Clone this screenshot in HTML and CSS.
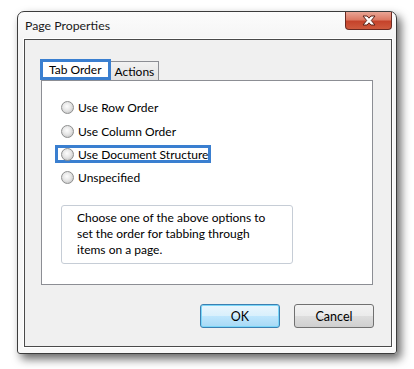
FILE: index.html
```html
<!DOCTYPE html>
<html lang="en">
<head>
    <meta charset="UTF-8">
    <title>Page Properties</title>
    <link rel="stylesheet" href="styles.css">
</head>
<body>
    <div class="window">
        <div class="title-bar">
            <span class="title">Page Properties</span>
            <div class="close-btn">
                <svg width="16" height="11" viewBox="0 0 16 11">
                    <path d="M2 1 L6 1 L8 3.2 L10 1 L14 1 L10.3 5.5 L14 10 L10 10 L8 7.8 L6 10 L2 10 L5.7 5.5 Z" fill="#fff" stroke="#5a2218" stroke-width="1" stroke-linejoin="round"/>
                </svg>
            </div>
        </div>
        <div class="client">
            <div class="tabs">
                <div class="tab active">Tab Order</div>
                <div class="tab">Actions</div>
            </div>
            <div class="tab-panel">
                <div class="options">
                    <div class="option"><label class="opt-label"><span class="radio"></span>Use Row Order</label></div>
                    <div class="option"><label class="opt-label"><span class="radio"></span>Use Column Order</label></div>
                    <div class="option"><label class="opt-label marked"><span class="radio"></span>Use Document Structure</label></div>
                    <div class="option"><label class="opt-label"><span class="radio"></span>Unspecified</label></div>
                </div>
                <div class="info-box">
                    Choose one of the above options to<br>
                    set the order for tabbing through<br>
                    items on a page.
                </div>
            </div>
            <div class="buttons">
                <button class="btn btn-default">OK</button>
                <button class="btn">Cancel</button>
            </div>
        </div>
    </div>
</body>
</html>
```

FILE: styles.css
```css
body {
    margin: 0;
    background: #fff;
    font-family: 'Lato', 'Open Sans', sans-serif;
    font-size: 12px;
    color: #000;
    height: 369px;
    overflow: hidden;
}
.window {
    margin: 11px 0 0 17px;
    width: 380px;
    height: 343px;
    box-sizing: border-box;
    border: 1px solid #3c3c3c;
    border-radius: 7px 7px 3px 3px;
    background: linear-gradient(180deg, #fcfcfc, #f4f4f4 30px, #f8f8f8);
    box-shadow: 4px 5px 10px rgba(0,0,0,0.6);
    display: flex;
    flex-direction: column;
}
.title-bar {
    display: flex;
    align-items: flex-start;
    height: 27px;
}
.title {
    padding: 6px 0 0 7px;
    font-size: 12.3px;
    color: #1a1a1a;
}
.close-btn {
    margin-left: auto;
    margin-right: 4px;
    width: 47px;
    height: 18px;
    box-sizing: border-box;
    border: 1px solid #6b2a22;
    border-top: none;
    border-radius: 0 0 4px 4px;
    background: linear-gradient(180deg, #e9a595 0%, #dc7a64 45%, #c5432b 55%, #cf5a3e 100%);
    display: flex;
    justify-content: center;
    align-items: center;
}
.client {
    margin: 0 4px 0 6px;
    height: 308px;
    box-sizing: border-box;
    border: 1px solid #4a4a4a;
    background: #f0f0f0;
    box-shadow: 0 0 0 1px #fff;
    padding: 19px 0 0 15px;
}
.tabs {
    display: flex;
    align-items: flex-start;
    height: 21px;
}
.tab {
    box-sizing: border-box;
    height: 19px;
    margin-top: 2px;
    padding: 1px 4px 0 4px;
    border: 1px solid #8c8e94;
    border-bottom: none;
    border-left: none;
    background: linear-gradient(180deg, #f2f2f2, #e2e2e2);
    line-height: 17px;
}
.tab.active {
    height: 21px;
    margin-top: 0;
    padding: 0 6px 0 6px;
    border: 3px solid #3a7fd0;
    background: #fff;
    line-height: 15px;
}
.tab-panel {
    margin-left: 1px;
    width: 332px;
    height: 205px;
    box-sizing: border-box;
    border: 1px solid #8c8e94;
    background: #fff;
    padding: 15px 0 0 13px;
}
.options {
    display: flex;
    flex-direction: column;
}
.option {
    height: 23.4px;
    display: flex;
    align-items: center;
}
.opt-label {
    display: inline-flex;
    align-items: center;
    height: 18px;
    box-sizing: border-box;
    border: 3px solid transparent;
    padding-left: 3px;
}
.opt-label.marked {
    border-color: #3a7fd0;
}
.radio {
    width: 13px;
    height: 13px;
    box-sizing: border-box;
    border-radius: 50%;
    border: 1px solid #8e8f8f;
    background: radial-gradient(circle at 45% 40%, #fdfdfd 0%, #e6e6e6 45%, #c8c8c8 80%, #f4f4f4 100%);
    margin-right: 4px;
    flex: none;
}
.info-box {
    margin: 15px 0 0 6px;
    width: 232px;
    height: 59px;
    box-sizing: border-box;
    border: 1px solid #c6cdd6;
    border-radius: 3px;
    padding: 4px 0 0 15px;
    font-size: 12px;
    line-height: 16px;
}
.buttons {
    display: flex;
    justify-content: flex-end;
    gap: 14px;
    margin-top: 19px;
    padding-right: 17px;
}
.btn {
    width: 80px;
    height: 24px;
    box-sizing: border-box;
    border: 1px solid #707070;
    border-radius: 3px;
    background: linear-gradient(180deg, #f2f2f2 0%, #ebebeb 48%, #dddddd 52%, #cfcfcf 100%);
    font-family: 'Lato', 'Open Sans', sans-serif;
    font-size: 12.5px;
    color: #000;
    padding: 0;
}
.btn-default {
    border-color: #3c7fb1;
    background: linear-gradient(180deg, #eaf6fd 0%, #d9f0fc 48%, #bee6fd 52%, #a7d9f5 100%);
    box-shadow: inset 0 0 0 1px #7ad6f8;
}
```
